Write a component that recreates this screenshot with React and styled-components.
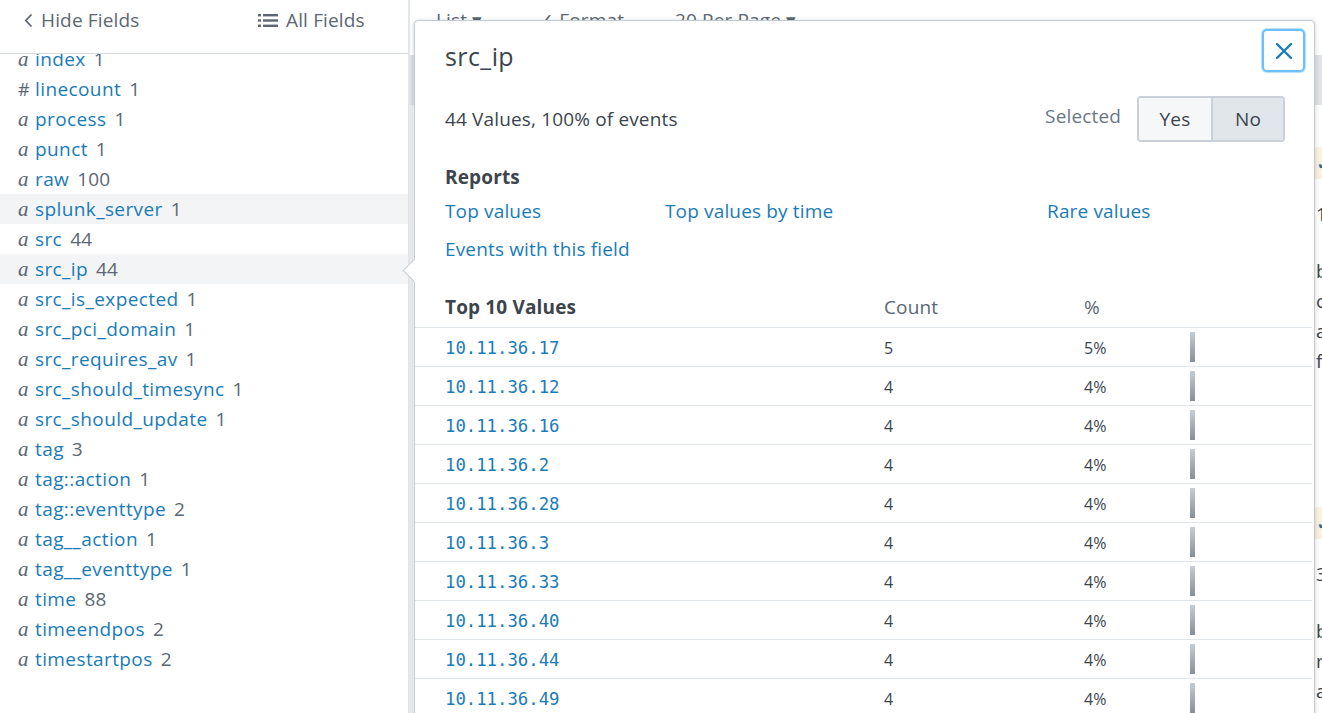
import React from 'react';
import styled, { createGlobalStyle } from 'styled-components';

const GlobalStyle = createGlobalStyle`
    html, body {
        margin: 0;
        padding: 0;
        height: 713px;
        overflow: hidden;
        background: #fff;
    }
    body {
        font-family: 'Open Sans', Lato, sans-serif;
        font-size: 19px;
        letter-spacing: 0.15px;
        color: #3c444d;
    }
`;

const BLUE = '#1a7bb9';

const Page = styled.div`
    position: relative;
    display: flex;
    height: 713px;
    overflow: hidden;
`;

/* ---------- sidebar ---------- */

const Sidebar = styled.div`
    width: 408px;
    flex-shrink: 0;
    display: flex;
    flex-direction: column;
    border-right: 2px solid #e1e6eb;
`;

const SidebarHeader = styled.div`
    height: 54px;
    flex-shrink: 0;
    display: flex;
    align-items: flex-start;
    padding: 8px 0 0 24px;
    box-sizing: border-box;
    border-bottom: 1px solid #d5dbe1;
    background: #fff;
    position: relative;
    z-index: 1;
`;

const HeaderLink = styled.div`
    display: flex;
    align-items: center;
    gap: ${props => props.gap || 8}px;
    line-height: 24px;
    color: #5c6773;
    width: ${props => props.width || 'auto'};
`;

const FieldList = styled.div`
    flex: 1;
    overflow: hidden;
`;

const FieldInner = styled.div`
    margin-top: -10px;
`;

const FieldRow = styled.div`
    height: 30px;
    display: flex;
    align-items: center;
    padding-left: 18px;
    background: ${props => (props.active ? '#f3f4f6' : 'transparent')};
`;

const TypeGlyph = styled.span`
    width: 17px;
    font-family: ${props => (props.num ? "'Open Sans', sans-serif" : "'Liberation Serif', serif")};
    font-style: ${props => (props.num ? 'normal' : 'italic')};
    font-size: ${props => (props.num ? '18px' : '21px')};
    color: #5c6773;
`;

const FieldName = styled.span`
    color: ${BLUE};
    letter-spacing: 0.4px;
`;

const FieldCount = styled.span`
    color: #5c6773;
    margin-left: 8px;
`;

/* ---------- main area ---------- */

const Main = styled.div`
    flex: 1;
    overflow: hidden;
    display: flex;
    flex-direction: column;
`;

const Toolbar = styled.div`
    height: 55px;
    flex-shrink: 0;
    display: flex;
    align-items: flex-start;
    padding: 8px 0 0 26px;
    box-sizing: border-box;
    color: #5c6773;
    line-height: 24px;
`;

const ToolItem = styled.span`
    width: ${props => props.width}px;
`;

const GrayBand = styled.div`
    height: 50px;
    flex-shrink: 0;
    background: #dfe3e8;
`;

const Events = styled.div`
    flex: 1;
    border-left: 3px solid #eceff2;
`;

const Event = styled.div`
    height: 360px;
    padding-top: 42px;
    box-sizing: border-box;
`;

const EventHead = styled.div`
    height: 32px;
    display: flex;
    align-items: center;
    padding-left: 903px;
    background: linear-gradient(to right, transparent 900px, #fbf1dc 900px);
    color: #1a6fa8;
`;

const EventLine = styled.div`
    height: 30px;
    line-height: 30px;
    padding-left: 903px;
    margin-top: ${props => props.gap || 0}px;
    color: #3c444d;
`;

/* ---------- popup ---------- */

const Popup = styled.div`
    position: absolute;
    left: 414px;
    top: 20px;
    width: 901px;
    height: 760px;
    box-sizing: border-box;
    background: #fff;
    border: 1px solid #c3cbd4;
    border-radius: 4px;
    box-shadow: 0 1px 5px rgba(0, 0, 0, 0.18);
    z-index: 5;
`;

const Arrow = styled.div`
    position: absolute;
    left: -9px;
    top: 241px;
    width: 16px;
    height: 16px;
    background: #fff;
    border-left: 1px solid #c3cbd4;
    border-bottom: 1px solid #c3cbd4;
    transform: rotate(45deg);
`;

const TitleRow = styled.div`
    display: flex;
    justify-content: space-between;
    align-items: flex-start;
    padding: 8px 9px 0 30px;
`;

const Title = styled.div`
    margin-top: 12px;
    font-size: 25px;
    line-height: 30px;
    letter-spacing: 0.4px;
    color: #3c444d;
`;

const CloseButton = styled.button`
    width: 43px;
    height: 43px;
    padding: 0;
    display: flex;
    align-items: center;
    justify-content: center;
    background: #fff;
    border: 2px solid #6cc0ff;
    border-radius: 5px;
    box-shadow: 0 0 1px 1px #b5defd;
    cursor: pointer;
`;

const SummaryRow = styled.div`
    margin-top: 24px;
    padding: 0 29px 0 30px;
    display: flex;
    align-items: center;
    justify-content: space-between;
    height: 46px;
`;

const SelectedBox = styled.div`
    display: flex;
    align-items: center;
    gap: 16px;
`;

const SelectedLabel = styled.span`
    color: #6b7785;
    margin-top: -6px;
`;

const ToggleGroup = styled.div`
    display: flex;
    height: 46px;
    border: 2px solid #c9d0d8;
    border-radius: 4px;
    overflow: hidden;
    box-sizing: border-box;
`;

const ToggleButton = styled.div`
    width: ${props => props.width}px;
    display: flex;
    align-items: center;
    justify-content: center;
    background: ${props => (props.active ? '#e1e6eb' : '#f6f7f9')};
    border-left: ${props => (props.divider ? '2px solid #c9d0d8' : 'none')};
    color: #3c444d;
`;

const SectionTitle = styled.div`
    margin-top: ${props => props.mt}px;
    padding-left: 30px;
    font-weight: 700;
    line-height: 24px;
    color: #3c444d;
`;

const Links = styled.div`
    margin-top: 10px;
    padding-left: 30px;
    display: grid;
    grid-template-columns: 220px 382px auto;
    row-gap: 14px;
    line-height: 24px;
`;

const Link = styled.a`
    color: ${BLUE};
    text-decoration: none;
    cursor: pointer;
`;

const Table = styled.div`
    margin-top: 26px;
    margin-right: 2px;
`;

const Row = styled.div`
    display: grid;
    grid-template-columns: 469px 200px 106px 1fr;
    align-items: center;
    height: ${props => (props.head ? 41 : 39)}px;
    padding-bottom: ${props => (props.head ? 1 : 0)}px;
    box-sizing: border-box;
    border-bottom: 1px solid #e1e6eb;
`;

const ValueCell = styled.div`
    padding-left: 30px;
    padding-top: 2px;
    font-family: 'DejaVu Sans Mono', monospace;
    font-size: 17.3px;
    letter-spacing: 0;
    color: ${BLUE};
`;

const HeadCell = styled.div`
    padding-left: ${props => props.pl || 0}px;
    font-weight: ${props => (props.bold ? 700 : 400)};
    color: ${props => (props.bold ? '#3c444d' : '#5c6773')};
`;

const Cell = styled.div`
    font-size: 16px;
    letter-spacing: 0;
    padding-top: 2px;
    color: #3c444d;
`;

const Bar = styled.div`
    width: 5px;
    height: 30px;
    background: linear-gradient(to bottom, #c5ccd4, #858f9b);
`;

const fields = [
    ['a', 'index', 1],
    ['#', 'linecount', 1],
    ['a', 'process', 1],
    ['a', 'punct', 1],
    ['a', 'raw', 100],
    ['a', 'splunk_server', 1, true],
    ['a', 'src', 44],
    ['a', 'src_ip', 44, true],
    ['a', 'src_is_expected', 1],
    ['a', 'src_pci_domain', 1],
    ['a', 'src_requires_av', 1],
    ['a', 'src_should_timesync', 1],
    ['a', 'src_should_update', 1],
    ['a', 'tag', 3],
    ['a', 'tag::action', 1],
    ['a', 'tag::eventtype', 2],
    ['a', 'tag__action', 1],
    ['a', 'tag__eventtype', 1],
    ['a', 'time', 88],
    ['a', 'timeendpos', 2],
    ['a', 'timestartpos', 2],
];

const values = [
    ['10.11.36.17', 5, '5%'],
    ['10.11.36.12', 4, '4%'],
    ['10.11.36.16', 4, '4%'],
    ['10.11.36.2', 4, '4%'],
    ['10.11.36.28', 4, '4%'],
    ['10.11.36.3', 4, '4%'],
    ['10.11.36.33', 4, '4%'],
    ['10.11.36.40', 4, '4%'],
    ['10.11.36.44', 4, '4%'],
    ['10.11.36.49', 4, '4%'],
];

const events = [
    ['1', 'b', 'c', 'a', 'f'],
    ['3', 'b', 'r', 'a', 'f'],
];

function ChevronLeft() {
    return (
        <svg width="9" height="15" viewBox="0 0 9 15">
            <polyline points="7.5,1.5 1.8,7.5 7.5,13.5" fill="none" stroke="#5c6773" strokeWidth="1.8" />
        </svg>
    );
}

function ListIcon() {
    return (
        <svg width="20" height="15" viewBox="0 0 20 15">
            <rect x="0" y="1" width="3" height="2.4" fill="#5c6773" />
            <rect x="0" y="6.3" width="3" height="2.4" fill="#5c6773" />
            <rect x="0" y="11.6" width="3" height="2.4" fill="#5c6773" />
            <rect x="5" y="1" width="15" height="2.4" fill="#5c6773" />
            <rect x="5" y="6.3" width="15" height="2.4" fill="#5c6773" />
            <rect x="5" y="11.6" width="15" height="2.4" fill="#5c6773" />
        </svg>
    );
}

function CloseIcon() {
    return (
        <svg width="18" height="18" viewBox="0 0 18 18">
            <path d="M2 2 L16 16 M16 2 L2 16" stroke={BLUE} strokeWidth="2.4" strokeLinecap="round" />
        </svg>
    );
}

export default function App() {
    return (
        <>
            <GlobalStyle />
            <Page>
                <Sidebar>
                    <SidebarHeader>
                        <HeaderLink width="234px">
                            <ChevronLeft />
                            Hide Fields
                        </HeaderLink>
                        <HeaderLink gap={8}>
                            <ListIcon />
                            All Fields
                        </HeaderLink>
                    </SidebarHeader>
                    <FieldList>
                        <FieldInner>
                            {fields.map(([type, name, count, active]) => (
                                <FieldRow key={name} active={active}>
                                    <TypeGlyph num={type === '#'}>{type}</TypeGlyph>
                                    <FieldName>{name}</FieldName>
                                    <FieldCount>{count}</FieldCount>
                                </FieldRow>
                            ))}
                        </FieldInner>
                    </FieldList>
                </Sidebar>

                <Main>
                    <Toolbar>
                        <ToolItem width={102}>List ▾</ToolItem>
                        <ToolItem width={137}>✓ Format</ToolItem>
                        <ToolItem width={160}>20 Per Page ▾</ToolItem>
                    </Toolbar>
                    <GrayBand />
                    <Events>
                        {events.map((lines, i) => (
                            <Event key={i}>
                                <EventHead>✓</EventHead>
                                <EventLine gap={20}>{lines[0]}</EventLine>
                                <EventLine gap={27}>{lines[1]}</EventLine>
                                <EventLine>{lines[2]}</EventLine>
                                <EventLine>{lines[3]}</EventLine>
                                <EventLine>{lines[4]}</EventLine>
                            </Event>
                        ))}
                    </Events>
                </Main>

                <Popup>
                    <Arrow />
                    <TitleRow>
                        <Title>src_ip</Title>
                        <CloseButton aria-label="Close">
                            <CloseIcon />
                        </CloseButton>
                    </TitleRow>
                    <SummaryRow>
                        <span>44 Values, 100% of events</span>
                        <SelectedBox>
                            <SelectedLabel>Selected</SelectedLabel>
                            <ToggleGroup>
                                <ToggleButton width={72}>Yes</ToggleButton>
                                <ToggleButton width={70} active divider>No</ToggleButton>
                            </ToggleGroup>
                        </SelectedBox>
                    </SummaryRow>

                    <SectionTitle mt={23}>Reports</SectionTitle>
                    <Links>
                        <Link>Top values</Link>
                        <Link>Top values by time</Link>
                        <Link>Rare values</Link>
                        <Link>Events with this field</Link>
                    </Links>

                    <Table>
                        <Row head>
                            <HeadCell bold pl={30}>Top 10 Values</HeadCell>
                            <HeadCell>Count</HeadCell>
                            <HeadCell>%</HeadCell>
                            <div />
                        </Row>
                        {values.map(([ip, count, pct]) => (
                            <Row key={ip}>
                                <ValueCell>{ip}</ValueCell>
                                <Cell>{count}</Cell>
                                <Cell>{pct}</Cell>
                                <Bar />
                            </Row>
                        ))}
                    </Table>
                </Popup>
            </Page>
        </>
    );
}
